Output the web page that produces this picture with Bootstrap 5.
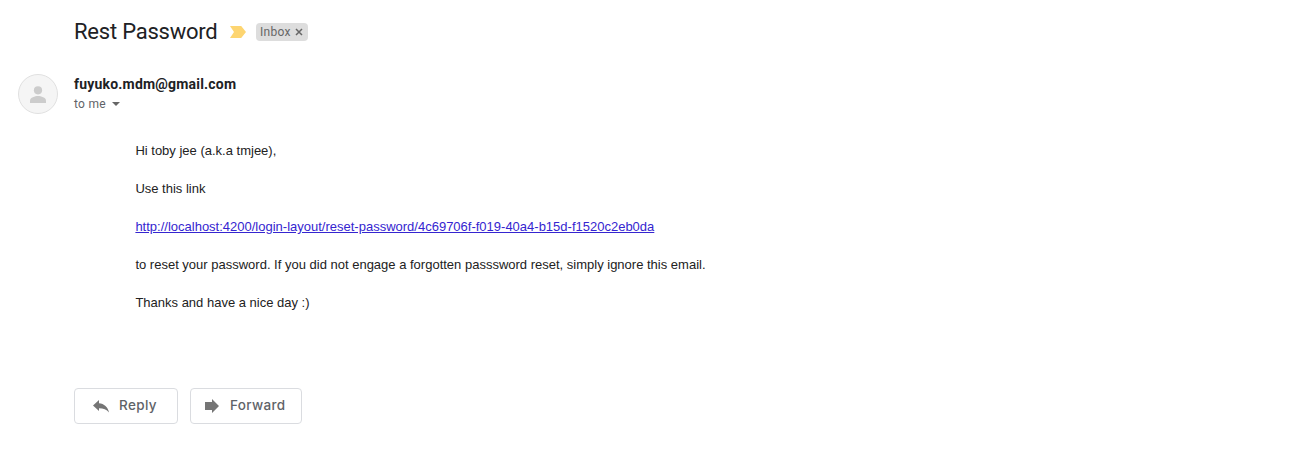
<!DOCTYPE html>
<html lang="en">
<head>
<meta charset="utf-8">
<title>Rest Password</title>
<link href="https://cdn.jsdelivr.net/npm/bootstrap@5.3.0/dist/css/bootstrap.min.css" rel="stylesheet">
<style>
  body { font-family: Roboto, sans-serif; color: #222; overflow: hidden; }
  .mail { padding: 16px 18px 0; }
  .subject { margin-left: 56px; height: 32px; }
  .subject h1 { font: 400 22px/32px Roboto, sans-serif; color: #202124; width: 156px; letter-spacing: -.22px; }
  .inbox-label { width: 52px; height: 18px; margin-left: 10px; padding: 0 5px 0 4px; background: #ddd; color: #666; border-radius: 4px; font-size: 12px; line-height: 18px; letter-spacing: .3px; }
  .sender { margin-top: 26px; gap: 16px; }
  .avatar { width: 40px; height: 40px; }
  .sender-name { font-size: 14px; line-height: 20px; font-weight: 700; color: #202124; letter-spacing: .2px; }
  .recipient { font-size: 12px; line-height: 20px; color: #5f6368; letter-spacing: .3px; gap: 6px; }
  .message { margin: 27px 0 0 117.4px; font: 13px/19px "Liberation Sans", Arial, sans-serif; }
  .message p { margin-bottom: 19px; }
  .message a { color: #3525d0; }
  .actions { margin: 76px 0 0 56px; gap: 12px; }
  .btn-mail { height: 36px; padding: 0 0 1px; border: 1px solid #dadce0; border-radius: 4px; background: #fff; color: #5f6368; font: 500 13.5px/33px Inter, sans-serif; letter-spacing: .35px; }
  .btn-reply { width: 104px; padding-left: 18px; gap: 10px; }
  .btn-forward { width: 112px; padding-left: 14px; gap: 11px; }
</style>
</head>
<body class="bg-white">
<main class="mail">
  <header class="subject d-flex align-items-center">
    <h1 class="m-0 text-nowrap">Rest Password</h1>
    <svg width="16" height="12" viewBox="0 0 16 12"><path fill="#fdd571" d="M0 0h11.2L16 6l-4.8 6H0l4-6z"/></svg>
    <span class="inbox-label d-flex align-items-center justify-content-between">Inbox
      <svg width="8" height="8" viewBox="0 0 8 8"><path d="M1 1l6 6M7 1L1 7" stroke="#666" stroke-width="1.500"/></svg>
    </span>
  </header>
  <section class="sender d-flex">
    <svg class="avatar" viewBox="0 0 40 40"><circle cx="20" cy="20" r="19.5" fill="#f5f5f5" stroke="#e0e0e0"/><circle cx="20" cy="16.3" r="4.1" fill="#ccc"/><path fill="#ccc" d="M12 29v-2.500c0-3 5-4.500 8-4.500s8 1.500 8 4.500V29z"/></svg>
    <div>
      <div class="sender-name">fuyuko.mdm@gmail.com</div>
      <div class="recipient d-flex align-items-center">to me
        <svg width="8" height="4" viewBox="0 0 8 4"><path fill="#666" d="M0 0h8L4 4z"/></svg>
      </div>
    </div>
  </section>
  <article class="message">
    <p>Hi toby jee (a.k.a tmjee),</p>
    <p>Use this link</p>
    <p><a href="#">http://localhost:4200/login-layout/reset-password/4c69706f-f019-40a4-b15d-f1520c2eb0da</a></p>
    <p>to reset your password. If you did not engage a forgotten passsword reset, simply ignore this email.</p>
    <p class="mb-0">Thanks and have a nice day :)</p>
  </article>
  <footer class="actions d-flex">
    <button class="btn btn-mail btn-reply d-flex align-items-center">
      <svg width="16" height="14" viewBox="0 0 16 14"><path fill="#757575" d="M0 6.500L6 1v3.200c5 .5 9 3.600 10 9.300-2.500-3.200-5.500-4.300-10-4.300V12z"/></svg>
      <span>Reply</span>
    </button>
    <button class="btn btn-mail btn-forward d-flex align-items-center">
      <svg width="14" height="14" viewBox="0 0 14 14"><path fill="#757575" d="M0 3h7V0l7 7-7 7v-3H0z"/></svg>
      <span>Forward</span>
    </button>
  </footer>
</main>
<script src="https://cdn.jsdelivr.net/npm/bootstrap@5.3.0/dist/js/bootstrap.bundle.min.js"></script>
</body>
</html>
